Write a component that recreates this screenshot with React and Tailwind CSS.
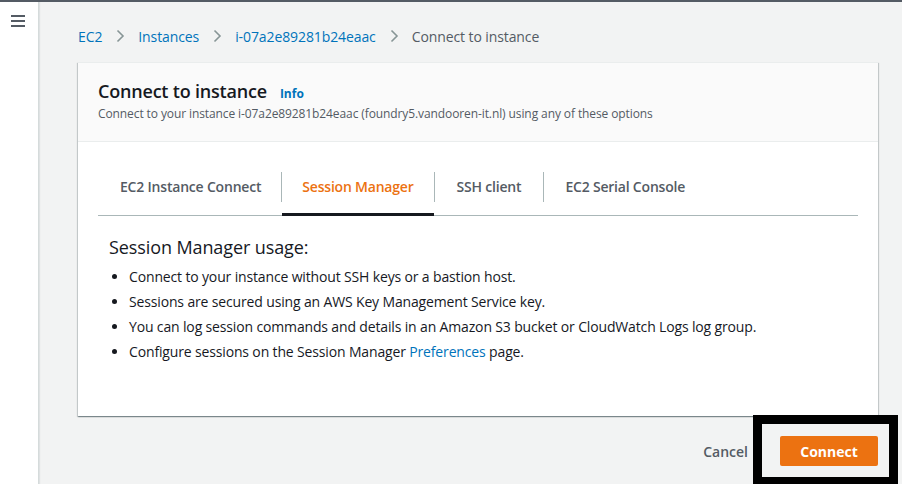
import React from "react";

const font = { fontFamily: '"Open Sans", "Noto Sans", sans-serif' };

const Chevron = () => (
  <svg width="16" height="16" viewBox="0 0 16 16" className="mx-[10px] shrink-0">
    <path d="M5.5 2.5 L11 8 L5.5 13.5" fill="none" stroke="#879596" strokeWidth="1.6" />
  </svg>
);

// padding per tab so the dividers land where the console puts them
const tabs = [
  { label: "EC2 Instance Connect", pad: "pl-[22px] pr-[20px]" },
  { label: "Session Manager", pad: "px-[20px]" },
  { label: "SSH client", pad: "px-[22px]" },
  { label: "EC2 Serial Console", pad: "px-[21px]" },
];

const bullets = [
  "Connect to your instance without SSH keys or a bastion host.",
  "Sessions are secured using an AWS Key Management Service key.",
  "You can log session commands and details in an Amazon S3 bucket or CloudWatch Logs log group.",
];

export default function App() {
  return (
    <div className="relative flex h-[484px] w-[902px] overflow-hidden border-t-2 border-[#545b64] bg-[#f2f3f3]" style={font}>
      {/* side nav toggle */}
      <div className="w-[39px] shrink-0 border-r border-[#d5dbdb] bg-white shadow-[1px_0_1px_rgba(0,28,36,0.08)]">
        <svg width="16" height="16" viewBox="0 0 16 16" className="ml-[10px] mt-[12px]">
          <path d="M1 2h14M1 7h14M1 12h14" stroke="#545b64" strokeWidth="1.8" />
        </svg>
      </div>

      <div className="flex flex-1 flex-col pl-[39px] pr-[24px]">
        {/* breadcrumbs */}
        <nav className="mt-[24px] flex h-[20px] items-center text-[14px] tracking-[-0.1px]">
          <span className="text-[#0073bb]">EC2</span>
          <Chevron />
          <span className="text-[#0073bb]">Instances</span>
          <Chevron />
          <span className="text-[#0073bb]">i-07a2e89281b24eaac</span>
          <Chevron />
          <span className="text-[#545b64]">Connect to instance</span>
        </nav>

        {/* card */}
        <div className="mt-[16px] border-t border-[#eaeded] bg-white shadow-[0_1px_1px_0_rgba(0,28,36,0.3),1px_1px_1px_0_rgba(0,28,36,0.15),-1px_1px_1px_0_rgba(0,28,36,0.15)]">
          <div className="border-b border-[#eaeded] bg-[#fafafa] px-[20px] pb-[19px] pt-[17px]">
            <div className="flex items-baseline">
              <h1 className="text-[18px] font-semibold leading-[22px] tracking-[-0.2px] text-[#16191f]">Connect to instance</h1>
              <span className="ml-[13px] text-[12px] font-bold text-[#0073bb]">Info</span>
            </div>
            <p className="mt-[3px] text-[12px] leading-[16px] tracking-[-0.1px] text-[#545b64]">
              Connect to your instance i-07a2e89281b24eaac (foundry5.vandooren-it.nl) using any of these options
            </p>
          </div>

          <div className="px-[20px] pb-[52px] pt-[30px]">
            <div className="flex border-b border-[#aab7b8]">
              {tabs.map((t, i) => (
                <React.Fragment key={t.label}>
                  {i > 0 && <span className="h-[30px] w-px shrink-0 bg-[#aab7b8]" />}
                  <div
                    className={
                      "relative flex h-[43px] items-start text-[14px] font-semibold tracking-[-0.2px] " +
                      t.pad +
                      (i === 1 ? " text-[#ec7211]" : " text-[#545b64]")
                    }
                  >
                    <span className="leading-[30px]">{t.label}</span>
                    {i === 1 && <span className="absolute bottom-[-1px] left-0 right-0 h-[3px] bg-[#16191f]" />}
                  </div>
                </React.Fragment>
              ))}
            </div>

            <div className="pl-[11px] pt-[19px] text-[#16191f]">
              <h2 className="text-[18px] leading-[24px] tracking-[-0.1px]">Session Manager usage:</h2>
              <ul className="mt-[5px] list-disc pl-[20px] text-[14px] leading-[25px] tracking-[-0.15px]">
                {bullets.map((b) => (
                  <li key={b}>{b}</li>
                ))}
                <li>
                  Configure sessions on the Session Manager <span className="text-[#0073bb]">Preferences</span> page.
                </li>
              </ul>
            </div>
          </div>
        </div>

        {/* actions */}
        <div className="mt-[20px] flex items-center justify-end">
          <span className="mr-[32px] text-[14px] font-semibold text-[#545b64]">Cancel</span>
          <button className="h-[30px] w-[98px] rounded-[2px] bg-[#ec7211] text-[14px] font-bold text-white">Connect</button>
        </div>
      </div>

      {/* highlight box drawn over the screenshot */}
      <div className="absolute left-[753px] top-[413px] h-[71px] w-[145px] border-[9px] border-black" />
    </div>
  );
}
